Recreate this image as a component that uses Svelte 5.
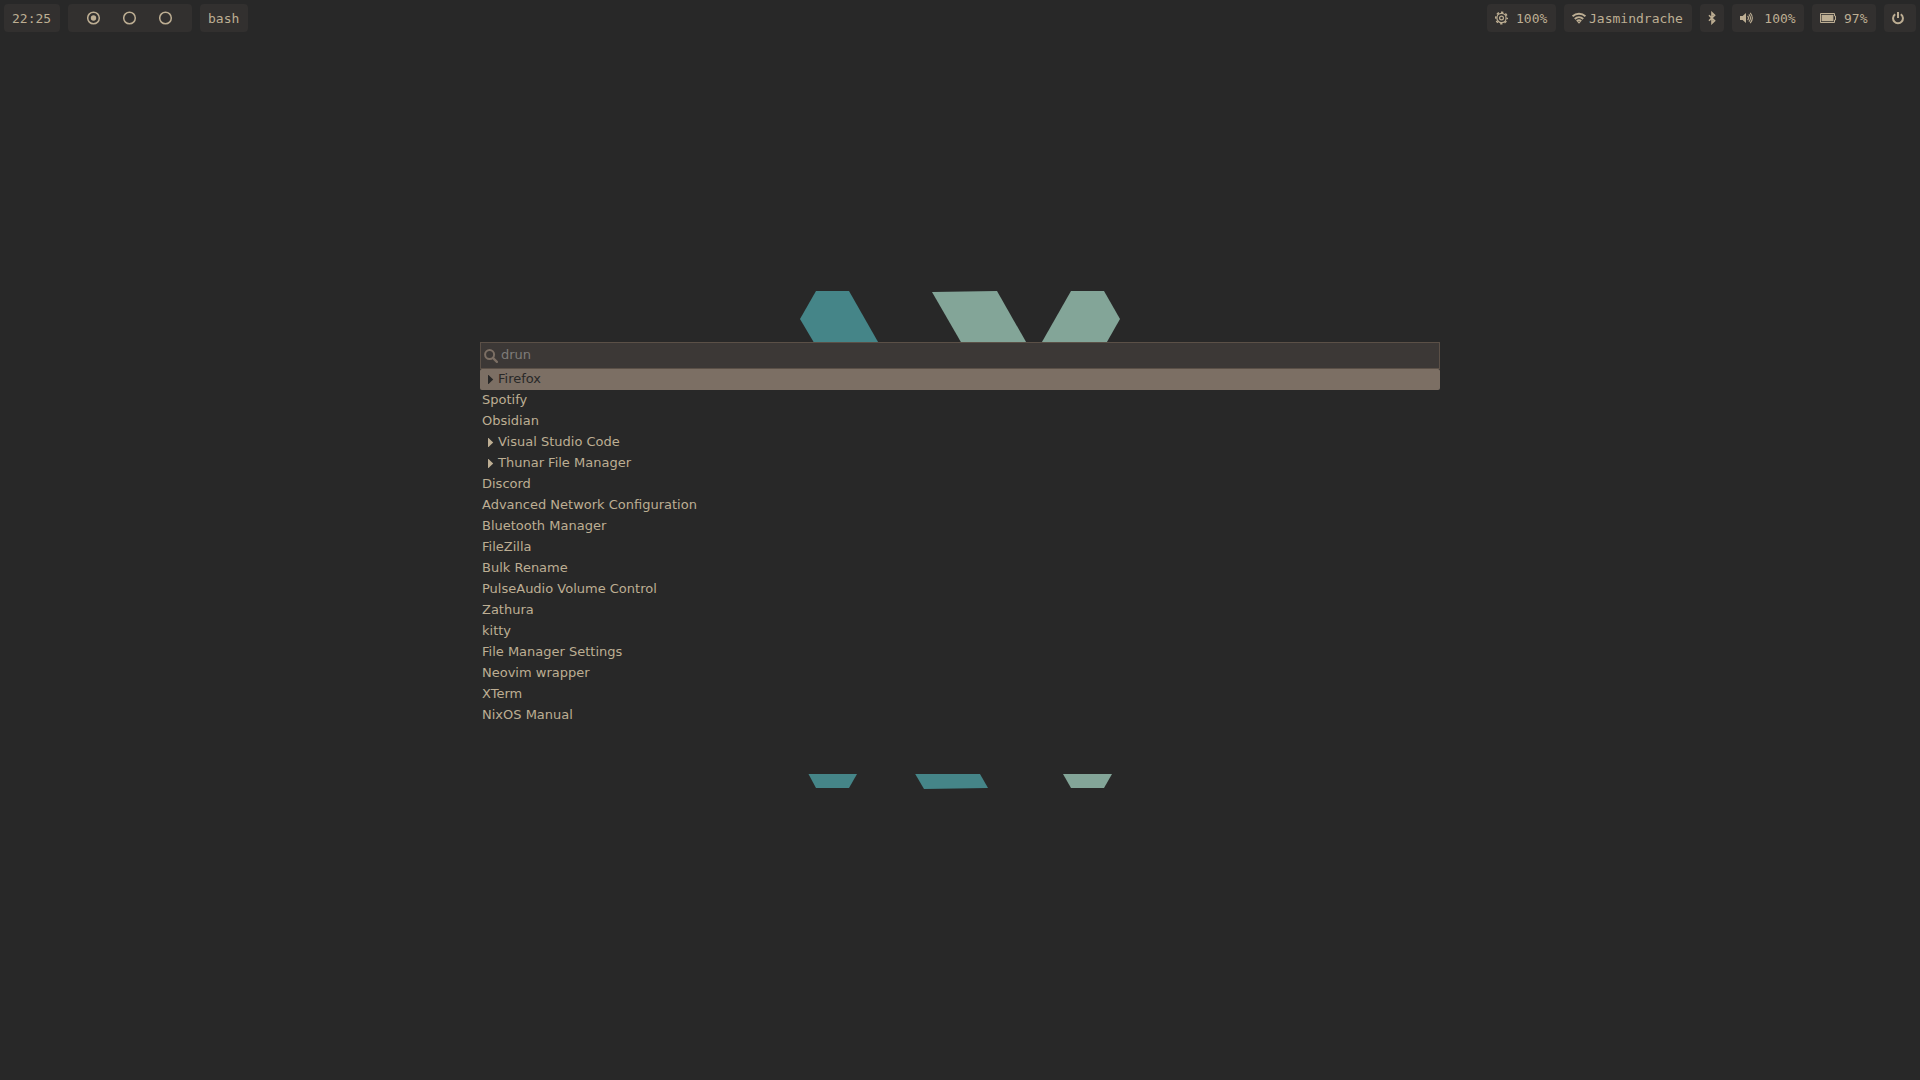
<script>
  let query = $state('');
  let workspace = $state(0);
  let selected = $state(0);

  const apps = [
    { name: 'Firefox', more: true },
    { name: 'Spotify' },
    { name: 'Obsidian' },
    { name: 'Visual Studio Code', more: true },
    { name: 'Thunar File Manager', more: true },
    { name: 'Discord' },
    { name: 'Advanced Network Configuration' },
    { name: 'Bluetooth Manager' },
    { name: 'FileZilla' },
    { name: 'Bulk Rename' },
    { name: 'PulseAudio Volume Control' },
    { name: 'Zathura' },
    { name: 'kitty' },
    { name: 'File Manager Settings' },
    { name: 'Neovim wrapper' },
    { name: 'XTerm' },
    { name: 'NixOS Manual' }
  ];

  const shown = $derived(apps.filter((a) => a.name.toLowerCase().includes(query.toLowerCase())));

  // Every character of the bar takes an 8px cell.
  const cells = (text) => `${text.length * 8}px`;
</script>

{#snippet label(text)}
  <span class="label" style:width={cells(text)}>{text}</span>
{/snippet}

<div class="desktop">
  <div class="wallpaper" aria-hidden="true">
    <svg width="320" height="498" viewBox="800 291 320 498">
      <g fill="#458588">
        <path d="M816 291h33l41 72h-64l-26-44z" />
        <path d="M801 760h64l-16 28h-33z" />
        <path d="M907 760h65l16 28-64 1z" />
      </g>
      <g fill="#83a598">
        <path d="M932 292l65-1 41 72h-65z" />
        <path d="M1071 291h33l16 28-25 44h-65z" />
        <path d="M1055 760h65l-16 28h-33z" />
      </g>
    </svg>
  </div>

  <header class="bar">
    <div class="group">
      <time class="pill">{@render label('22:25')}</time>
      <nav class="pill" aria-label="Workspaces">
        {#each [0, 1, 2] as i}
          <button class="workspace" aria-label="Workspace {i + 1}" onclick={() => (workspace = i)}>
            <svg width="14" height="14" viewBox="0 0 14 14">
              <circle cx="6.5" cy="7" r="5.8" fill="none" stroke="currentColor" stroke-width="1.5" />
              {#if workspace === i}<circle cx="6.5" cy="7" r="2.7" fill="currentColor" />{/if}
            </svg>
          </button>
        {/each}
      </nav>
      <div class="pill">{@render label('bash')}</div>
    </div>

    <div class="group">
      <div class="pill gear">
        <svg width="14" height="14" viewBox="0 0 14 14" fill="none" stroke="currentColor">
          <circle cx="6.5" cy="7" r="4.6" stroke-width="1.2" />
          <circle cx="6.5" cy="7" r="5.8" stroke-width="1.5" stroke-dasharray="2.4 2.155" stroke-dashoffset="1.2" />
          <circle cx="6.5" cy="7" r="1.9" stroke-width="1.2" />
        </svg>
        {@render label('100%')}
      </div>
      <button class="pill tight">
        <svg width="14" height="12" viewBox="0 0 14 12" fill="none" stroke="currentColor" stroke-width="2">
          <path d="M.6 4.4a9.2 9.2 0 0 1 12.8 0M2.8 7a6.2 6.2 0 0 1 8.4 0M4.8 9.3a3.3 3.3 0 0 1 4.4 0" />
          <path fill="currentColor" stroke="none" d="M5.2 9.8h3.6L7 11.8z" />
        </svg>
        {@render label('Jasmindrache')}
      </button>
      <button class="pill" aria-label="Bluetooth">
        <svg width="8" height="14" viewBox="0 0 8 14" fill="none" stroke="currentColor" stroke-width="1.6">
          <path d="M1 4.2 6.6 9.7 4 12.2V1.8l2.6 2.5L1 9.8" />
        </svg>
      </button>
      <button class="pill loose">
        <svg width="14" height="12" viewBox="0 0 14 12">
          <path fill="currentColor" d="M0 4h2.6L6 .9v10.2L2.6 8H0z" />
          <path fill="none" stroke="currentColor" stroke-width="1.1" d="M7.6 3.8q1.8 2.2 0 4.4M8.9 2.3q3.2 3.7 0 7.4M10.2.9q4.3 5.1 0 10.2" />
        </svg>
        {@render label('100%')}
      </button>
      <div class="pill">
        <svg width="16" height="10" viewBox="0 0 16 10">
          <path fill="none" stroke="currentColor" d="M.5.5h14V3h1v4h-1v2.5H.5z" />
          <path fill="currentColor" d="M1.6 1.8h11.8v6.4H1.6z" />
        </svg>
        {@render label('97%')}
      </div>
      <button class="pill power" aria-label="Power">
        <svg width="12" height="14" viewBox="0 0 12 14" fill="none" stroke="currentColor" stroke-width="2">
          <path d="M3.2 3.3a4.9 4.9 0 1 0 5.6 0M6 1v6" />
        </svg>
      </button>
    </div>
  </header>

  <main>
    <section class="launcher" aria-label="Application launcher">
      <label class="search">
        <svg width="14" height="14" viewBox="0 0 14 14" fill="none" stroke="currentColor">
          <circle cx="5.6" cy="5.6" r="4.5" stroke-width="2" />
          <path d="M8.9 8.9l4 4" stroke-width="2.2" stroke-linecap="round" />
        </svg>
        <input type="text" placeholder="drun" aria-label="Search applications" bind:value={query} />
      </label>
      <ul>
        {#each shown as app, i}
          <li>
            <button class="entry" class:selected={selected === i} onclick={() => (selected = i)}>
              {#if app.more}
                <svg width="16" height="9" viewBox="0 0 16 9"><path fill="currentColor" d="M6 0h.5l4.7 4.5L6.5 9H6z" /></svg>
              {/if}
              <span>{app.name}</span>
            </button>
          </li>
        {/each}
      </ul>
    </section>
  </main>
</div>

<style>
  :global(body) {
    margin: 0;
    background: #282828;
  }
  .desktop {
    position: relative;
    display: flex;
    flex-direction: column;
    min-height: 100vh;
    color: #bdae93;
    font: 13px/19px 'DejaVu Sans', sans-serif;
  }
  .wallpaper {
    position: absolute;
    inset: 0;
    display: grid;
    place-items: center;
  }
  svg {
    display: block;
    flex: none;
  }
  button {
    border: 0;
    margin: 0;
    color: inherit;
    font: inherit;
  }
  .bar {
    position: relative;
    display: flex;
    justify-content: space-between;
    padding: 4px;
    font: 13px/26px 'DejaVu Sans Mono', monospace;
  }
  .group {
    display: flex;
    gap: 8px;
  }
  .pill {
    display: flex;
    align-items: center;
    gap: 8px;
    height: 28px;
    padding: 0 8px;
    border-radius: 4px;
    background: #32302f;
  }
  .pill.gear {
    gap: 7px;
  }
  .pill.tight {
    gap: 2px;
  }
  .pill.loose {
    gap: 10px;
  }
  .pill.power {
    padding-right: 12px;
  }
  nav.pill {
    gap: 0;
  }
  .label {
    padding-top: 2px;
    white-space: nowrap;
  }
  .workspace {
    display: grid;
    place-items: center;
    width: 36px;
    height: 28px;
    padding: 0;
    background: none;
  }
  main {
    position: relative;
    flex: 1;
    display: grid;
    place-items: center;
  }
  .launcher {
    width: 50%;
    min-height: 40vh;
    background: #282828;
  }
  .search {
    display: flex;
    align-items: center;
    gap: 3px;
    height: 25px;
    padding: 0 3px;
    border: 1px solid #5b5047;
    background: #3c3836;
    color: #7c6f64;
  }
  input {
    flex: 1;
    min-width: 0;
    padding: 0 0 2px;
    border: 0;
    outline: 0;
    background: none;
    color: #bdae93;
    font: inherit;
  }
  input::placeholder {
    color: #7f7c79;
    opacity: 1;
  }
  ul {
    margin: 0;
    padding: 0;
    list-style: none;
  }
  .entry {
    display: flex;
    align-items: center;
    width: 100%;
    height: 21px;
    padding: 0 2px;
    border-radius: 2px;
    background: none;
    text-align: left;
  }
  .entry span {
    padding-bottom: 2px;
  }
  .entry.selected {
    background: #7c6f64;
    color: #282828;
  }
</style>
